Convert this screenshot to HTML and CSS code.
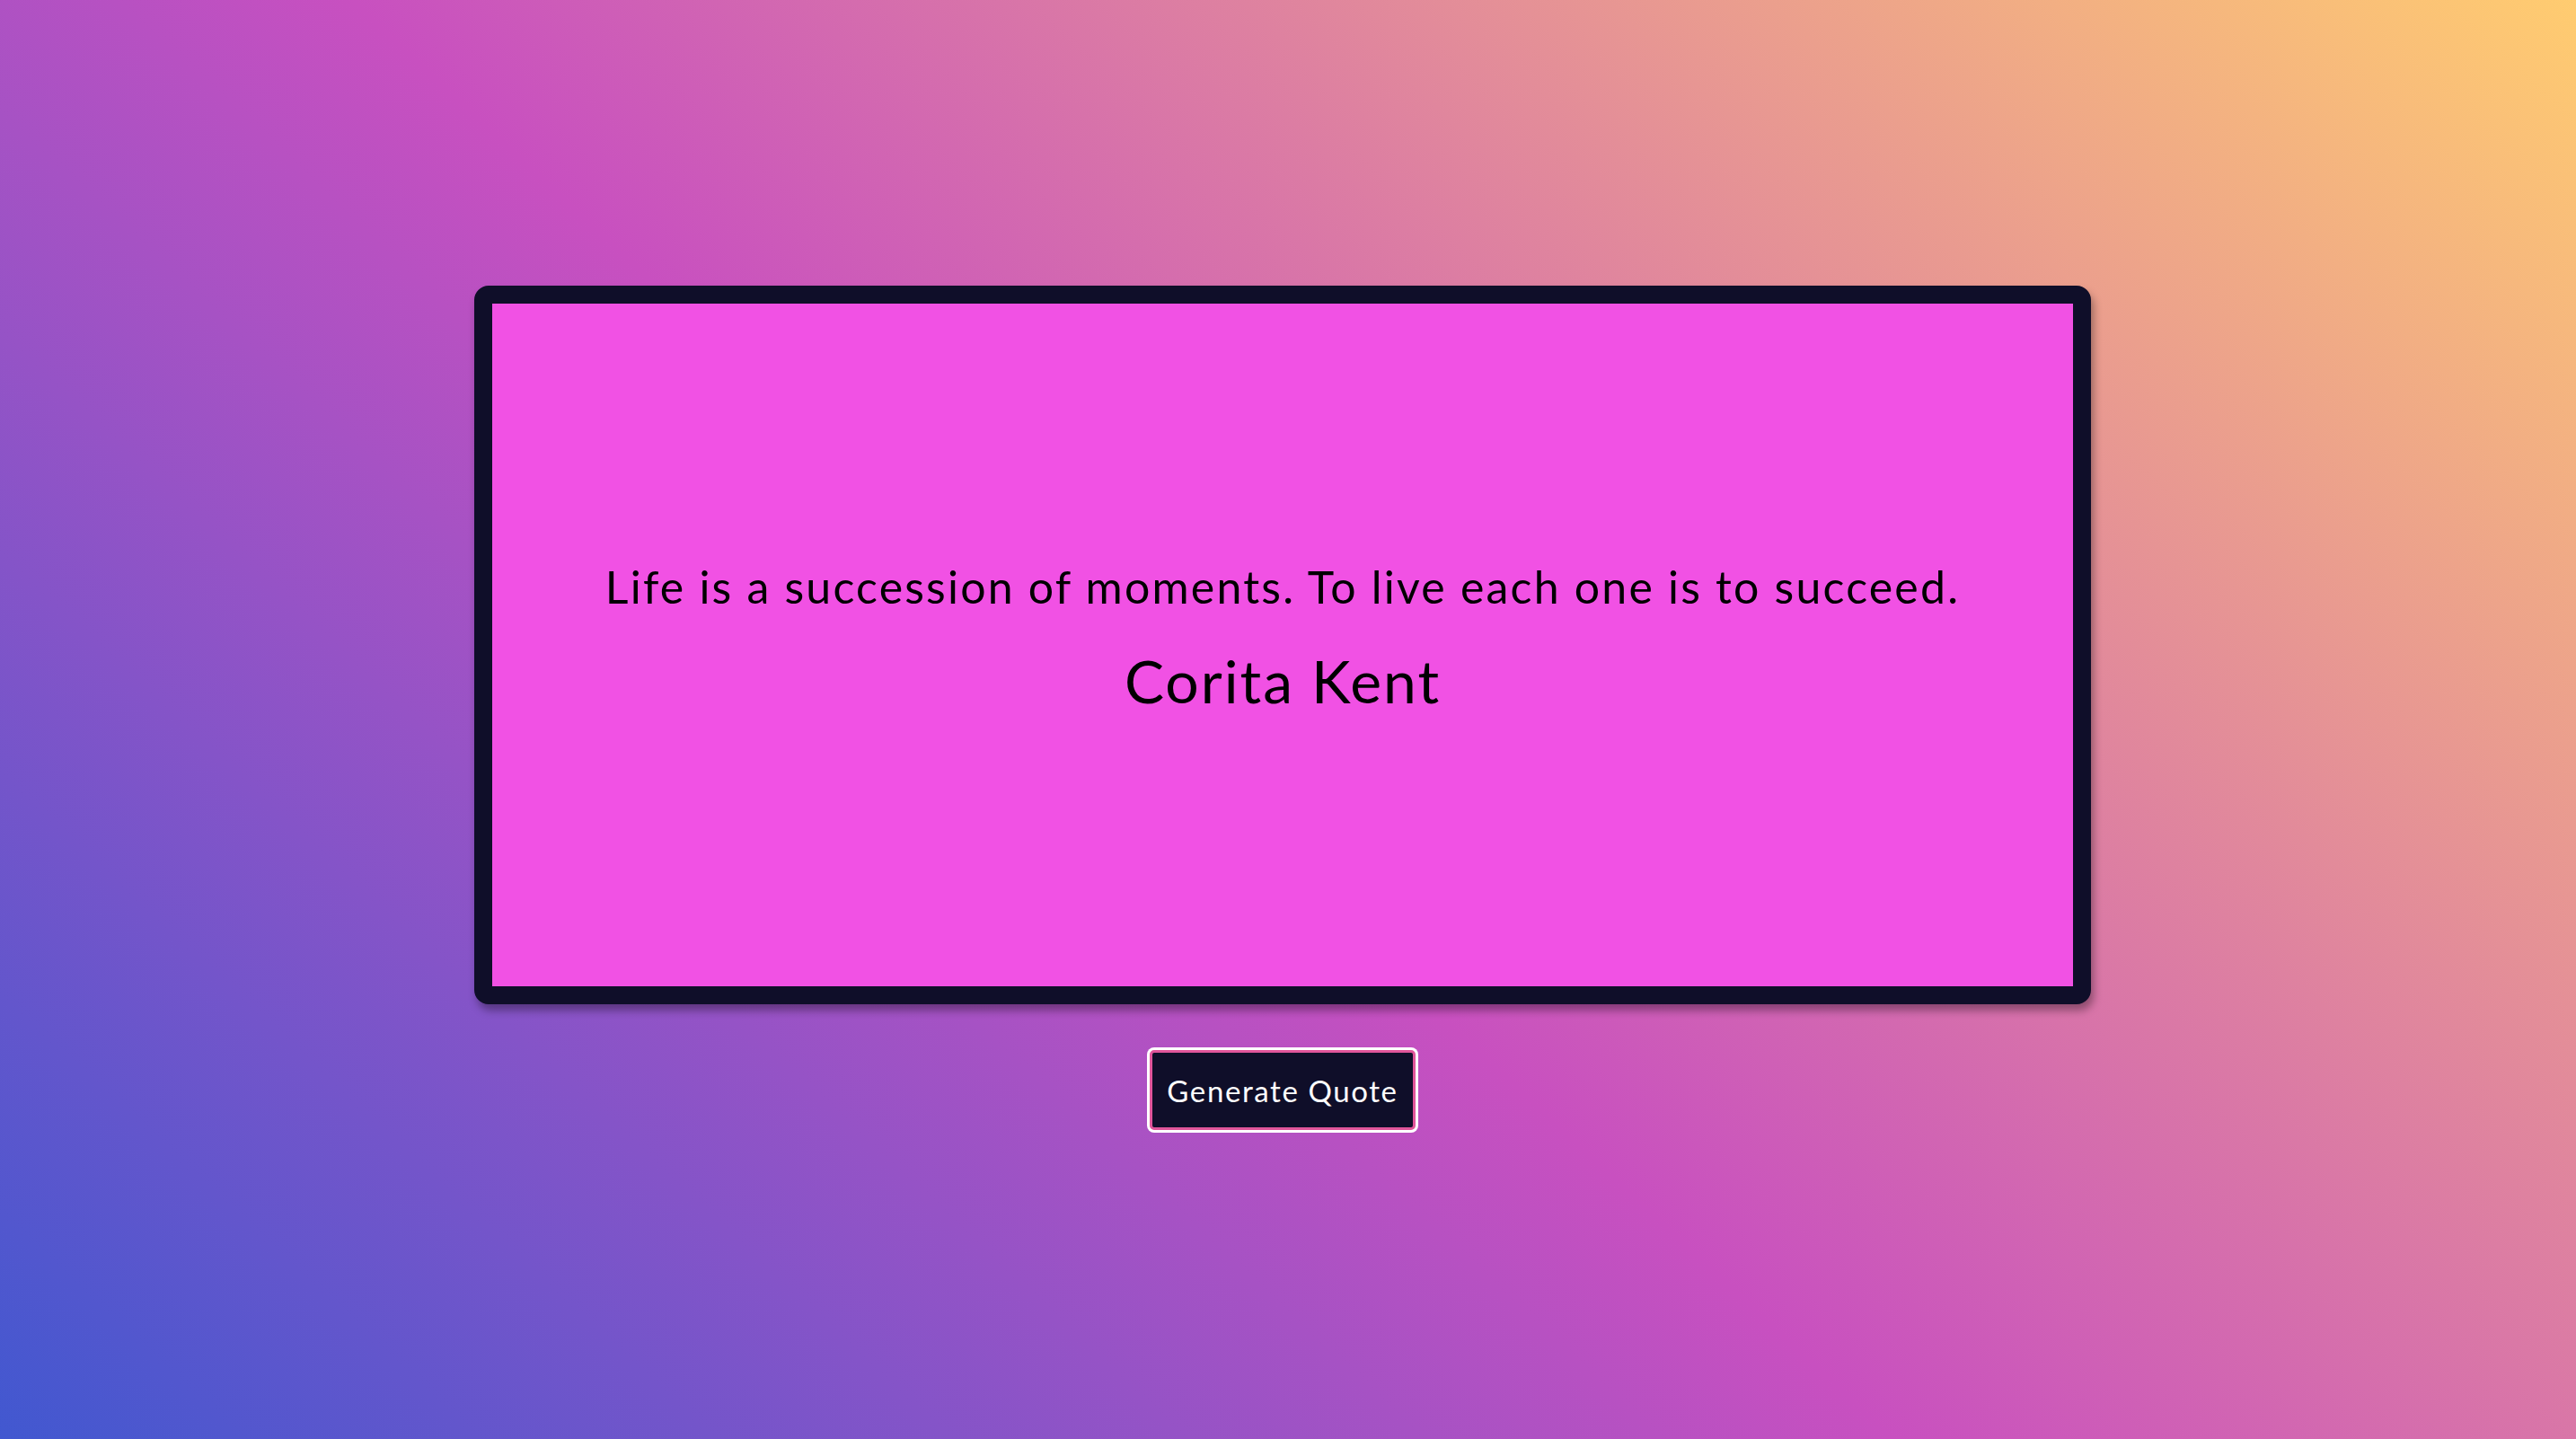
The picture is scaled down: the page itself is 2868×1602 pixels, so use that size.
FILE: index.html
```html
<!DOCTYPE html>
<html lang="en">
<head>
<meta charset="utf-8">
<title>Quote Generator</title>
<link rel="stylesheet" href="styles.css">
</head>
<body>
  <main class="page">
    <section class="card">
      <p class="quote">Life is a succession of moments. To live each one is to succeed.</p>
      <p class="author">Corita Kent</p>
    </section>
    <button class="btn" type="button">Generate Quote</button>
  </main>
</body>
</html>
```

FILE: styles.css
```css
html, body {
  margin: 0;
  padding: 0;
  height: 100%;
}
body {
  background: linear-gradient(43deg, #4158D0 0%, #C850C0 46%, #FFCC70 100%);
  font-family: "Lato", "Inter", "Liberation Sans", sans-serif;
}
.page {
  box-sizing: border-box;
  min-height: 100vh;
  display: flex;
  flex-direction: column;
  align-items: center;
  justify-content: center;
  gap: 51px;
  padding: 0 12px 26px 0;
}
.card {
  box-sizing: border-box;
  width: 1800px;
  height: 800px;
  background: #f151e4;
  border: 20px solid #0f0e29;
  border-radius: 16px;
  box-shadow: 3px 7px 10px rgba(0, 0, 0, 0.35);
  display: flex;
  flex-direction: column;
  align-items: center;
  justify-content: center;
  padding-bottom: 20px;
}
.quote {
  margin: 0;
  font-size: 50px;
  line-height: 70px;
  color: #000;
  letter-spacing: 2.2px;
}
.author {
  margin: 30px 0 0;
  font-size: 66px;
  line-height: 80px;
  color: #000;
  letter-spacing: 2px;
}
.btn {
  box-sizing: border-box;
  width: 296px;
  height: 89px;
  background: #0f0e29;
  color: #fff;
  font-family: inherit;
  font-size: 33px;
  letter-spacing: 1.6px;
  border: 3px solid #e0559a;
  border-radius: 5px;
  box-shadow: 0 0 0 3px #fff;
  cursor: pointer;
  padding: 0;
}
```
